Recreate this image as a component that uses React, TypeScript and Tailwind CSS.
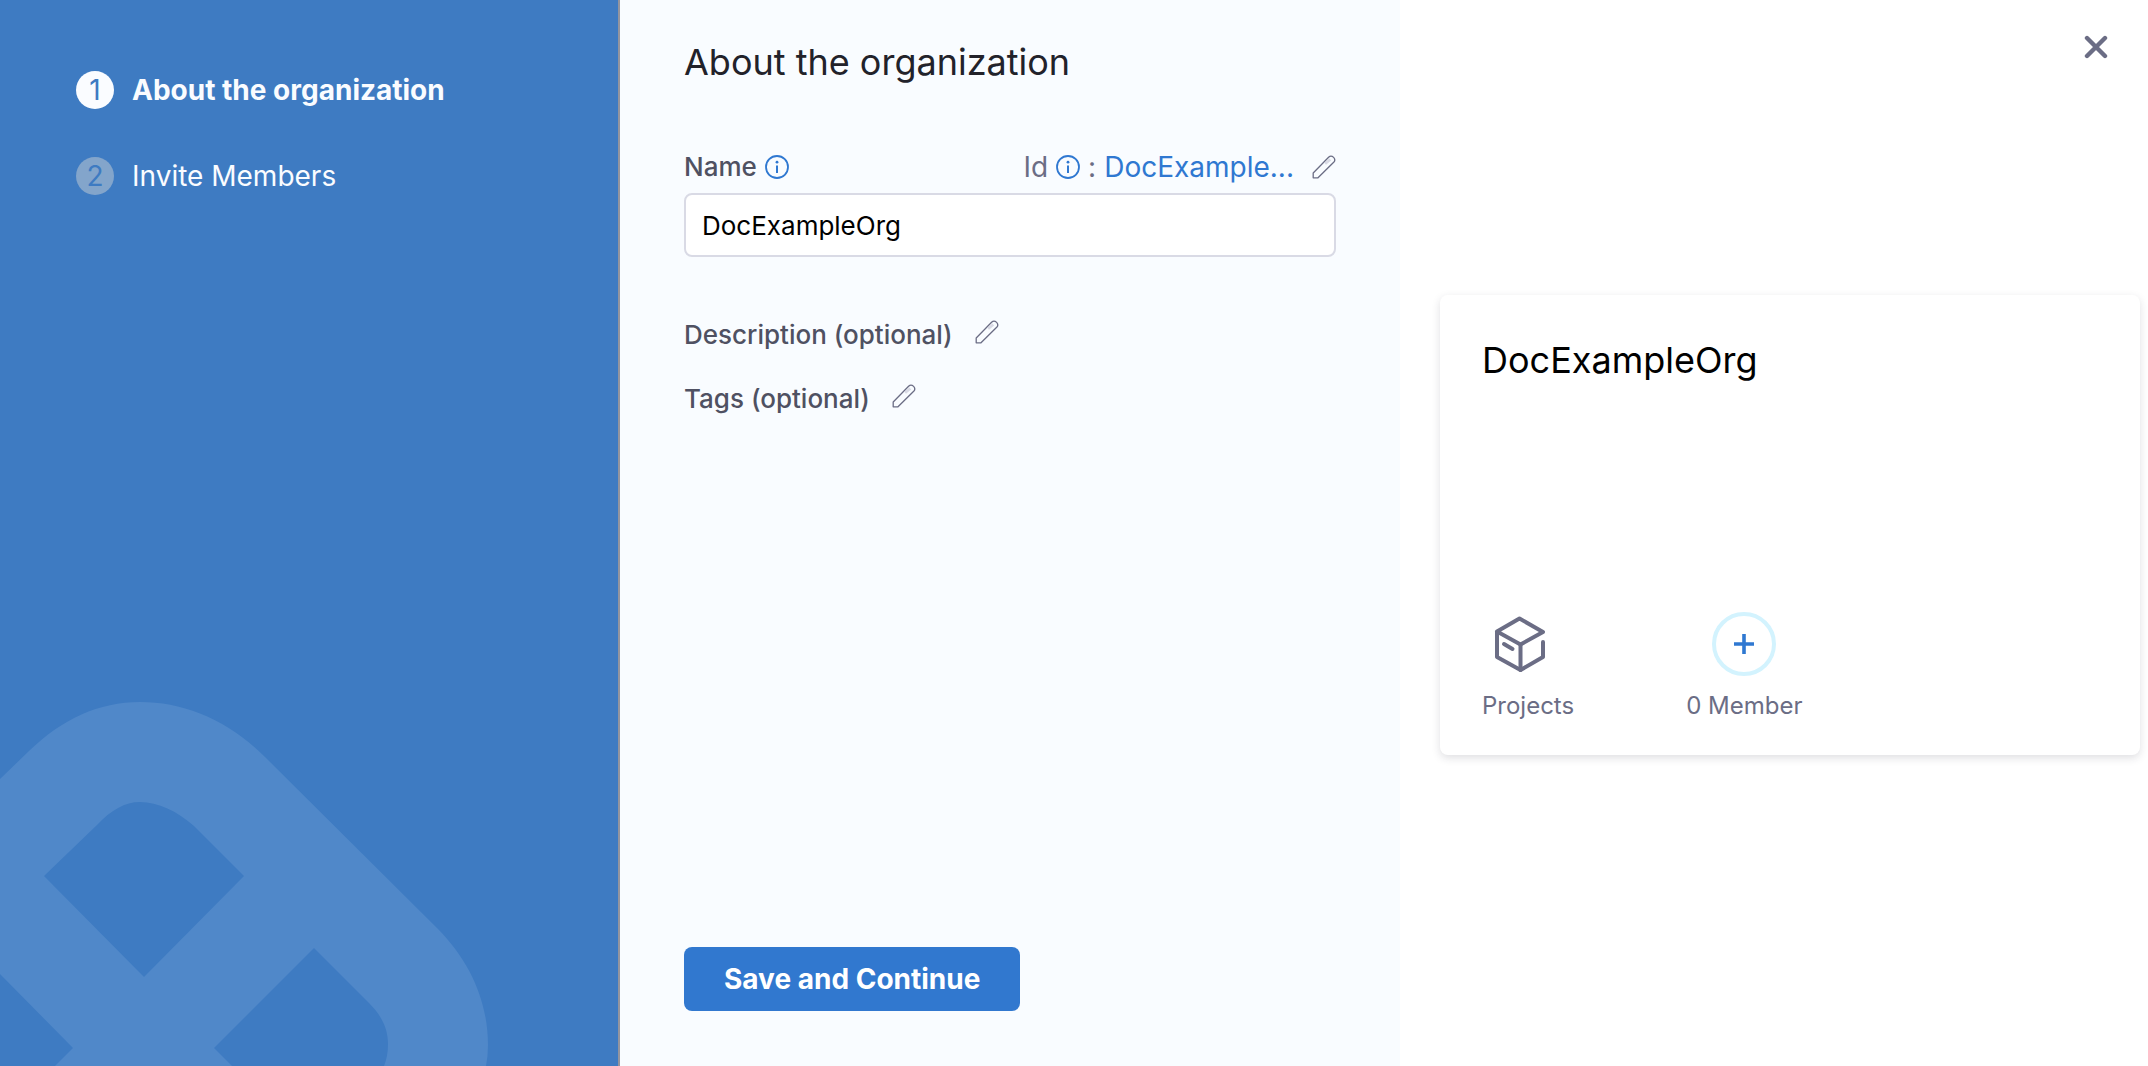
import { useState } from "react";

function InfoIcon() {
  return (
    <svg viewBox="0 0 24 24" className="size-6 shrink-0" fill="none" aria-hidden="true">
      <circle cx="12" cy="12" r="11" stroke="#2f78d1" strokeWidth="1.8" />
      <circle cx="12" cy="7.2" r="1.4" fill="#2f78d1" />
      <path d="M12 10.6V18" stroke="#2f78d1" strokeWidth="2" />
    </svg>
  );
}

function PencilIcon() {
  return (
    <svg viewBox="0 0 24 24" className="size-6" fill="none" aria-hidden="true">
      <path
        d="M1.2 22.8V18L16.6 2.3C18 .9 20 .9 21.6 2.4C23.1 4 23.1 5.8 21.7 7.3L6 22.8Z"
        stroke="#6b6d85"
        strokeWidth="1.3"
        strokeLinejoin="round"
      />
      <path d="M13.2 8.7L18.3 4.4" stroke="#d9dae5" strokeWidth="2.6" />
    </svg>
  );
}

function BoxIcon() {
  return (
    <svg
      viewBox="0 0 52 56"
      className="h-14 w-[52px]"
      fill="none"
      stroke="#6b6d85"
      strokeWidth="4"
      strokeLinecap="round"
      strokeLinejoin="round"
      aria-hidden="true"
    >
      <path d="M3 15.5L25.500 2.500L49 16L26.500 28.500L3 15.500V41L26.500 54L49 41V26" />
      <path d="M26.500 28.500V54" />
      <path d="M10 28L18.500 33" />
    </svg>
  );
}

function Watermark() {
  return (
    <svg viewBox="0 0 490 366" className="absolute bottom-0 left-0 w-[490px]" aria-hidden="true">
      <path
        fill="#5088c9"
        fillRule="evenodd"
        d="M0 79L29 51C62 19 99 2 140 2C184 2 228 20 265 57L437 228C471 262 488 303 488 345Q488 356 486 366H384Q388 356 388 344C388 328 381 315 369 303L314 248L214 348L232 366H55L73 348L0 274ZM44 176L97 125C111 110 125 102 140 102C158 102 177 111 194 126L244 176L144 277Z"
      />
    </svg>
  );
}

function Step({ number, label, active = false }: { number: number; label: string; active?: boolean }) {
  return (
    <li className="flex items-center gap-[18px]" aria-current={active ? "step" : undefined}>
      <span
        className={
          active
            ? "flex size-[38px] items-center justify-center rounded-full bg-[#fafcff] text-[28px] leading-none text-[#3e7bc2]"
            : "flex size-[38px] items-center justify-center rounded-full bg-[#83a5cb] text-[28px] leading-none text-[#3e7bc2]"
        }
      >
        {number}
      </span>
      <span className={active ? "text-[28px] leading-9 font-bold" : "text-[28px] leading-9"}>{label}</span>
    </li>
  );
}

function OptionalField({ label }: { label: string }) {
  return (
    <div className="flex items-center gap-[22px] text-[26px] leading-8 font-medium text-[#4f5162]">
      <span>{label}</span>
      <button type="button" aria-label={`Edit ${label}`} className="pb-1.5">
        <PencilIcon />
      </button>
    </div>
  );
}

export default function App() {
  const [name, setName] = useState("DocExampleOrg");

  return (
    <div className="grid min-h-screen grid-cols-[620fr_780fr_748fr] bg-white font-['Inter',sans-serif]">
      <aside className="relative overflow-hidden border-r-2 border-[#93959f] bg-[#3e7bc2] px-19 pt-[71px] text-[#fafcff]">
        <Watermark />
        <ol className="relative flex flex-col gap-12">
          <Step number={1} label="About the organization" active />
          <Step number={2} label="Invite Members" />
        </ol>
      </aside>

      <main className="flex flex-col bg-[#f9fcff] px-16 pt-10 pb-[55px]">
        <h1 className="text-[36px] leading-11 text-[#22222a]">About the organization</h1>

        <div className="mt-[65px] flex items-center justify-between">
          <div className="flex items-center gap-2">
            <label htmlFor="org-name" className="text-[26px] leading-9 font-medium text-[#4f5162]">
              Name
            </label>
            <InfoIcon />
          </div>
          <div className="flex items-center text-[28px] leading-9 text-[#6b6d85]">
            <span>Id</span>
            <span className="mx-2">
              <InfoIcon />
            </span>
            <span>:</span>
            <span className="ml-2 text-[#2f78d1]">DocExample...</span>
            <button type="button" aria-label="Edit Id" className="ml-[18px]">
              <PencilIcon />
            </button>
          </div>
        </div>
        <input
          id="org-name"
          type="text"
          value={name}
          onChange={(event) => setName(event.target.value)}
          className="mt-2 h-16 w-full rounded-lg border-2 border-[#d9dae5] bg-white px-4 text-[26px] text-black outline-none"
        />

        <div className="mt-[62px] flex flex-col gap-8">
          <OptionalField label="Description (optional)" />
          <OptionalField label="Tags (optional)" />
        </div>

        <button
          type="button"
          className="mt-auto h-16 self-start rounded-lg bg-[#3178cf] px-10 text-[28px] leading-9 font-bold text-white"
        >
          Save and Continue
        </button>
      </main>

      <section className="flex flex-col pr-2 pl-10">
        <button type="button" aria-label="Close" className="mt-[35px] mr-8 self-end">
          <svg viewBox="0 0 24 24" className="size-6" aria-hidden="true">
            <path d="M3 3L21 21M21 3L3 21" stroke="#6b6d85" strokeWidth="4.4" strokeLinecap="round" />
          </svg>
        </button>
        <article className="mt-[236px] flex min-h-[460px] flex-col rounded-lg bg-white px-[42px] pt-[43px] pb-[31px] shadow-[0_3px_8px_rgba(40,41,61,0.15)]">
          <h2 className="text-[36px] leading-11 text-black">{name}</h2>
          <div className="mt-auto flex gap-28 text-2xl leading-9 text-[#6b6d85]">
            <div className="flex flex-col gap-3">
              <div className="flex h-16 items-center pl-3">
                <BoxIcon />
              </div>
              <span>Projects</span>
            </div>
            <div className="flex flex-col items-center gap-3">
              <button
                type="button"
                aria-label="Add member"
                className="flex size-16 items-center justify-center rounded-full border-4 border-[#d3f3fe]"
              >
                <svg viewBox="0 0 20 20" className="size-5" aria-hidden="true">
                  <path d="M10 0V20M0 10H20" stroke="#2f78d1" strokeWidth="3.6" />
                </svg>
              </button>
              <span>0 Member</span>
            </div>
          </div>
        </article>
      </section>
    </div>
  );
}
